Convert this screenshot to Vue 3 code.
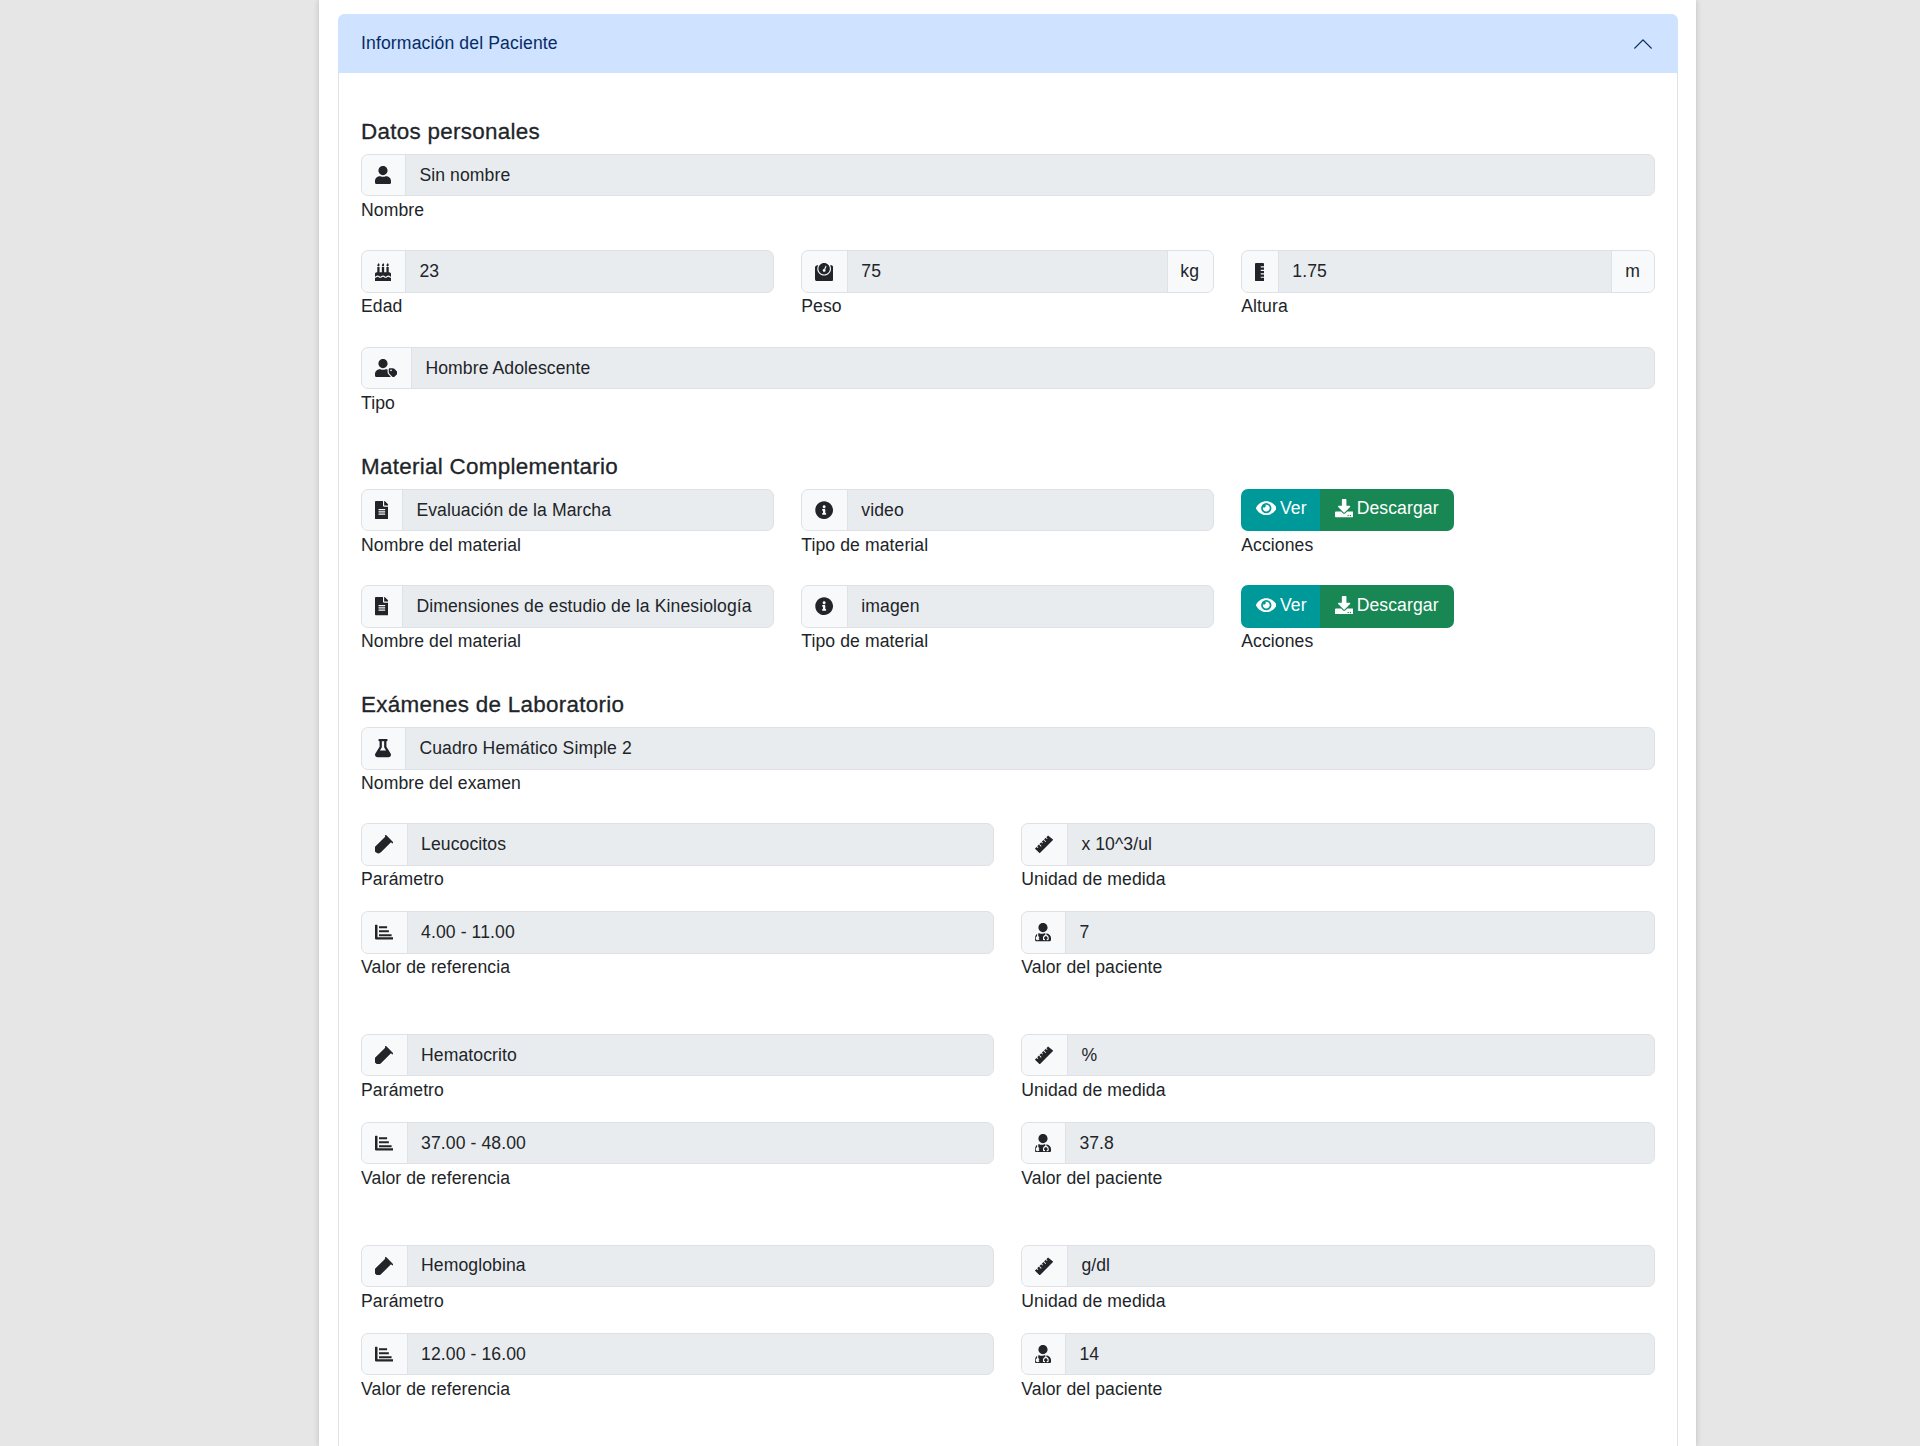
<script setup>
const ICONS = {
  user: [448, 'M224 256c70.7 0 128-57.3 128-128S294.7 0 224 0 96 57.3 96 128s57.3 128 128 128zm89.6 32h-16.7c-22.2 10.2-46.9 16-72.9 16s-50.6-5.8-72.9-16h-16.7C60.2 288 0 348.2 0 422.4V464c0 26.5 21.5 48 48 48h352c26.5 0 48-21.5 48-48v-41.6c0-74.2-60.2-134.4-134.4-134.4z'],
  cake: [448, 'M448 384c-28.02 0-31.26-32-74.5-32-43.43 0-46.825 32-74.75 32-27.695 0-31.454-32-74.75-32-42.842 0-47.218 32-74.5 32-28.148 0-31.202-32-74.75-32-43.547 0-46.653 32-74.75 32v-80c0-26.5 21.5-48 48-48h16V112h64v144h64V112h64v144h64V112h64v144h16c26.5 0 48 21.5 48 48v80zm0 128H0v-96c43.356 0 46.767-32 74.75-32 27.951 0 31.253 32 74.75 32 42.843 0 47.217-32 74.5-32 28.148 0 31.201 32 74.75 32 43.357 0 46.767-32 74.75-32 27.488 0 31.252 32 74.5 32v96zM96 96c-17.75 0-32-14.25-32-32 0-31 32-23 32-64 12 0 32 29.5 32 56s-14.25 40-32 40zm128 0c-17.75 0-32-14.25-32-32 0-31 32-23 32-64 12 0 32 29.5 32 56s-14.25 40-32 40zm128 0c-17.75 0-32-14.25-32-32 0-31 32-23 32-64 12 0 32 29.5 32 56s-14.25 40-32 40z'],
  weight: [512, 'M448 64h-25.98C438.44 92.28 448 125.01 448 160c0 105.87-86.13 192-192 192S64 265.87 64 160c0-34.99 9.56-67.72 25.98-96H64C28.71 64 0 92.71 0 128v320c0 35.29 28.71 64 64 64h384c35.29 0 64-28.71 64-64V128c0-35.29-28.71-64-64-64zM256 320c88.37 0 160-71.63 160-160S344.37 0 256 0 96 71.63 96 160s71.63 160 160 160zm-.3-151.94l33.58-78.36c3.5-8.17 12.94-11.92 21.03-8.41 8.12 3.48 11.88 12.89 8.41 21l-33.67 78.55C291.73 188 296 197.45 296 208c0 22.09-17.91 40-40 40s-40-17.91-40-40c0-21.98 17.76-39.77 39.7-39.94z'],
  rulerV: [256, 'M168 416c-4.42 0-8-3.58-8-8v-16c0-4.42 3.58-8 8-8h88v-64h-88c-4.42 0-8-3.58-8-8v-16c0-4.42 3.58-8 8-8h88v-64h-88c-4.42 0-8-3.58-8-8v-16c0-4.42 3.58-8 8-8h88v-64h-88c-4.42 0-8-3.58-8-8V96c0-4.42 3.58-8 8-8h88V32c0-17.67-14.33-32-32-32H32C14.33 0 0 14.33 0 32v448c0 17.67 14.33 32 32 32h192c17.67 0 32-14.33 32-32v-64h-88z'],
  userTag: [640, 'M630.6 364.9l-90.3-90.2c-12-12-28.3-18.7-45.3-18.7h-79.3c-17.7 0-32 14.3-32 32v79.2c0 17 6.7 33.2 18.7 45.2l90.3 90.2c12.5 12.5 32.8 12.5 45.3 0l92.5-92.5c12.6-12.4 12.6-32.7.1-45.2zm-182.8-21c-13.3 0-24-10.7-24-24s10.7-24 24-24 24 10.7 24 24c0 13.2-10.7 24-24 24zm-223.8-88c70.7 0 128-57.3 128-128C352 57.3 294.7 0 224 0S96 57.3 96 128c0 70.6 57.3 128 128 128zm127.8 111.2V294c-12.2-3.6-24.9-6.2-38.2-6.2h-16.7c-22.2 10.2-46.9 16-72.9 16s-50.6-5.8-72.9-16h-16.7C60.2 287.9 0 348.1 0 422.3v41.6c0 26.5 21.5 48 48 48h352c15.5 0 29.1-7.5 37.9-18.9l-58-58c-18.1-18.1-28.1-42.2-28.1-67.9z'],
  file: [384, 'M224 136V0H24C10.7 0 0 10.7 0 24v464c0 13.3 10.7 24 24 24h336c13.3 0 24-10.7 24-24V160H248c-13.2 0-24-10.8-24-24zm64 236c0 6.6-5.4 12-12 12H108c-6.6 0-12-5.4-12-12v-8c0-6.6 5.4-12 12-12h168c6.6 0 12 5.4 12 12v8zm0-64c0 6.6-5.4 12-12 12H108c-6.6 0-12-5.4-12-12v-8c0-6.6 5.4-12 12-12h168c6.6 0 12 5.4 12 12v8zm0-72v8c0 6.6-5.4 12-12 12H108c-6.6 0-12-5.4-12-12v-8c0-6.6 5.4-12 12-12h168c6.6 0 12 5.4 12 12zm96-114.1v6.1H256V0h6.1c6.4 0 12.5 2.5 17 7l97.9 98c4.5 4.5 7 10.6 7 16.9z'],
  info: [512, 'M256 8C119.043 8 8 119.083 8 256c0 136.997 111.043 248 248 248s248-111.003 248-248C504 119.083 392.957 8 256 8zm0 110c23.196 0 42 18.804 42 42s-18.804 42-42 42-42-18.804-42-42 18.804-42 42-42zm56 254c0 6.627-5.373 12-12 12h-88c-6.627 0-12-5.373-12-12v-24c0-6.627 5.373-12 12-12h12v-64h-12c-6.627 0-12-5.373-12-12v-24c0-6.627 5.373-12 12-12h64c6.627 0 12 5.373 12 12v100h12c6.627 0 12 5.373 12 12v24z'],
  eye: [576, 'M572.52 241.4C518.29 135.59 410.93 64 288 64S57.68 135.64 3.48 241.41a32.35 32.35 0 0 0 0 29.19C57.71 376.41 165.07 448 288 448s230.32-71.64 284.52-177.41a32.35 32.35 0 0 0 0-29.19zM288 400a144 144 0 1 1 144-144 143.93 143.93 0 0 1-144 144zm0-240a95.31 95.31 0 0 0-25.31 3.79 47.85 47.85 0 0 1-66.9 66.9A95.78 95.78 0 1 0 288 160z'],
  download: [512, 'M216 0h80c13.3 0 24 10.7 24 24v168h87.7c17.8 0 26.7 21.5 14.1 34.1L269.7 378.3c-7.5 7.5-19.8 7.5-27.3 0L90.1 226.1c-12.6-12.6-3.7-34.1 14.1-34.1H192V24c0-13.3 10.7-24 24-24zm296 376v112c0 13.3-10.7 24-24 24H24c-13.3 0-24-10.7-24-24V376c0-13.3 10.7-24 24-24h146.7l49 49c20.1 20.1 52.5 20.1 72.6 0l49-49H488c13.3 0 24 10.7 24 24zm-124 88c0-11-9-20-20-20s-20 9-20 20 9 20 20 20 20-9 20-20zm64 0c0-11-9-20-20-20s-20 9-20 20 9 20 20 20 20-9 20-20z'],
  flask: [448, 'M437.2 403.5L320 215V64h8c13.3 0 24-10.7 24-24V24c0-13.3-10.7-24-24-24H120c-13.3 0-24 10.7-24 24v16c0 13.3 10.7 24 24 24h8v151L10.8 403.5C-18.5 450.6 15.3 512 70.9 512h306.2c55.7 0 89.4-61.5 60.1-108.5zM137.9 320l48.2-77.6c3.7-5.2 5.8-11.6 5.8-18.4V64h64v160c0 6.9 2.2 13.2 5.8 18.4l48.2 77.6h-172z'],
  vial: [512, 'M319 9L503 193a24 24 0 0 1-34 34l-21-21L174 478a113 113 0 0 1-160-160L286 46l-1-1a24 24 0 0 1 34-36zM334 108L404 178L302 280H162z'],
  ruler: [512, 'M-2 380l47-47 32 32 17-17-32-32 47-47 57 57 17-17-57-57 47-47 32 32 17-17-32-32 47-47 57 57 17-17-57-57 47-47 32 32 17-17-32-32 47-47L514 132 132 514z'],
  chart: [512, 'M0 64a16 16 0 0 1 16-16h38a16 16 0 0 1 16 16v332h426a16 16 0 0 1 16 16v36a16 16 0 0 1-16 16H32a32 32 0 0 1-32-32zM112 92h226v56H112zM112 204h276v56H112zM112 316h352v56H112z'],
  userMd: [448, 'M224 256c70.7 0 128-57.3 128-128S294.7 0 224 0 96 57.3 96 128s57.3 128 128 128zM104 424c0 13.3 10.7 24 24 24s24-10.7 24-24-10.7-24-24-24-24 10.7-24 24zm216-135.4v49c36.5 7.4 64 39.8 64 78.4v41.7c0 7.6-5.4 14.2-12.9 15.7l-32.2 6.4c-4.3.9-8.5-1.9-9.4-6.3l-3.1-15.7c-.9-4.3 1.9-8.6 6.3-9.4l19.3-3.9V416c0-62.8-96-65.1-96 1.9v26.7l19.3 3.9c4.3.9 7.1 5.1 6.3 9.4l-3.1 15.7c-.9 4.3-5.1 7.1-9.4 6.3l-31.2-4.2c-7.9-1.1-13.8-7.8-13.8-15.9V416c0-38.6 27.5-70.9 64-78.4v-49c-3-.9-6-1.7-9.1-2.3h-16.7c-22.2 10.2-46.9 16-72.9 16s-50.6-5.8-72.9-16h-16.7c-3.1.6-6.1 1.4-9.1 2.3v81.6c23.1 6.9 40 28.1 40 53.4 0 30.9-25.1 56-56 56s-56-25.1-56-56c0-25.3 16.9-46.5 40-53.4v-67.2C44.3 316.4 0 369.5 0 422.4v44.8c0 24.7 20.1 44.8 44.8 44.8h358.4c24.7 0 44.8-20.1 44.8-44.8v-44.8c0-58.1-39.5-106.9-128-133.8z'],
}
const vb = (k) => `0 0 ${ICONS[k][0]} 512`
const iw = (k) => (ICONS[k][0] / 512) * 18.3 + 'px'

const materials = [
  { name: 'Evaluación de la Marcha', type: 'video' },
  { name: 'Dimensiones de estudio de la Kinesiología', type: 'imagen' },
]
const exams = [
  { p: 'Leucocitos', u: 'x 10^3/ul', r: '4.00 - 11.00', v: '7' },
  { p: 'Hematocrito', u: '%', r: '37.00 - 48.00', v: '37.8' },
  { p: 'Hemoglobina', u: 'g/dl', r: '12.00 - 16.00', v: '14' },
]
const examFields = (e) => [
  { i: 'vial', a: 46.7, t: e.p, l: 'Parámetro' },
  { i: 'ruler', a: 46.7, t: e.u, l: 'Unidad de medida' },
  { i: 'chart', a: 46.7, t: e.r, l: 'Valor de referencia' },
  { i: 'userMd', a: 44.7, t: e.v, l: 'Valor del paciente' },
]
const vitals = [
  { i: 'cake', a: 45, t: '23', l: 'Edad' },
  { i: 'weight', a: 46.7, t: '75', l: 'Peso', s: 'kg', sw: 47 },
  { i: 'rulerV', a: 37.7, t: '1.75', l: 'Altura', s: 'm', sw: 44 },
]
</script>

<template>
  <div class="page">
    <main class="card">
      <section class="accordion">
        <header class="acc-head">
          <span>Información del Paciente</span>
          <svg class="chev" viewBox="0 0 16 16"><path fill="currentColor" d="M1.646 11.354a.5.5 0 0 0 .708 0L8 5.707l5.646 5.647a.5.5 0 0 0 .708-.708l-6-6a.5.5 0 0 0-.708 0l-6 6a.5.5 0 0 0 0 .708z"/></svg>
        </header>
        <div class="acc-body">
          <h5>Datos personales</h5>
          <div class="field">
            <div class="group">
              <span class="addon" style="width:45px"><svg :viewBox="vb('user')" :style="{ width: iw('user') }"><path :d="ICONS.user[1]"/></svg></span>
              <span class="value">Sin nombre</span>
            </div>
            <label>Nombre</label>
          </div>

          <div class="row3 gap-row">
            <div v-for="f in vitals" :key="f.l" class="field">
              <div class="group">
                <span class="addon" :style="{ width: f.a + 'px' }"><svg :viewBox="vb(f.i)" :style="{ width: iw(f.i) }"><path :d="ICONS[f.i][1]"/></svg></span>
                <span class="value">{{ f.t }}</span>
                <span v-if="f.s" class="addon end" :style="{ width: f.sw + 'px' }">{{ f.s }}</span>
              </div>
              <label>{{ f.l }}</label>
            </div>
          </div>

          <div class="field gap-row">
            <div class="group">
              <span class="addon" style="width:51px"><svg :viewBox="vb('userTag')" :style="{ width: iw('userTag') }"><path :d="ICONS.userTag[1]"/></svg></span>
              <span class="value">Hombre Adolescente</span>
            </div>
            <label>Tipo</label>
          </div>

          <h5 class="next">Material Complementario</h5>
          <div v-for="(m, idx) in materials" :key="m.name" class="row3" :class="{ 'gap-row': idx > 0 }">
            <div class="field">
              <div class="group">
                <span class="addon" style="width:42px"><svg :viewBox="vb('file')" :style="{ width: iw('file') }"><path :d="ICONS.file[1]"/></svg></span>
                <span class="value">{{ m.name }}</span>
              </div>
              <label>Nombre del material</label>
            </div>
            <div class="field">
              <div class="group">
                <span class="addon" style="width:46.7px"><svg :viewBox="vb('info')" :style="{ width: iw('info') }"><path :d="ICONS.info[1]"/></svg></span>
                <span class="value">{{ m.type }}</span>
              </div>
              <label>Tipo de material</label>
            </div>
            <div class="field">
              <div class="btns">
                <button class="btn ver"><svg :viewBox="vb('eye')" :style="{ width: iw('eye') }"><path :d="ICONS.eye[1]"/></svg>Ver</button>
                <button class="btn desc"><svg :viewBox="vb('download')" :style="{ width: iw('download') }"><path :d="ICONS.download[1]"/></svg>Descargar</button>
              </div>
              <label>Acciones</label>
            </div>
          </div>

          <h5 class="next">Exámenes de Laboratorio</h5>
          <div class="field">
            <div class="group">
              <span class="addon" style="width:45px"><svg :viewBox="vb('flask')" :style="{ width: iw('flask') }"><path :d="ICONS.flask[1]"/></svg></span>
              <span class="value">Cuadro Hemático Simple 2</span>
            </div>
            <label>Nombre del examen</label>
          </div>

          <div v-for="e in exams" :key="e.p" class="exam">
            <div v-for="f in examFields(e)" :key="f.l" class="field">
              <div class="group">
                <span class="addon" :style="{ width: f.a + 'px' }"><svg :viewBox="vb(f.i)" :style="{ width: iw(f.i) }"><path :d="ICONS[f.i][1]"/></svg></span>
                <span class="value">{{ f.t }}</span>
              </div>
              <label>{{ f.l }}</label>
            </div>
          </div>
        </div>
      </section>
    </main>
  </div>
</template>

<style>
html, body { margin: 0; background: #e6e6e6; overflow: hidden; }
</style>

<style scoped>
.page {
  height: 1446px;
  overflow: hidden;
  background: #e6e6e6;
  font-family: "Liberation Sans", Arial, sans-serif;
  font-size: 17.6px;
  line-height: 26.4px;
  letter-spacing: .09px;
  color: #212529;
}
.card {
  width: 1377px;
  margin-left: 319px;
  height: 1446px;
  box-sizing: border-box;
  padding: 14px 18px 0 18.5px;
  background: #fff;
  box-shadow: 0 0 6px rgba(0, 0, 0, .18);
}
.accordion {
  height: 1432px;
  border: 1px solid #dee2e6;
  border-bottom: 0;
  border-radius: 7px 7px 0 0;
  box-sizing: border-box;
}
.acc-head {
  height: 59px;
  margin: -1px -1px 0;
  padding: 0 24px 0 23.5px;
  display: flex;
  align-items: center;
  justify-content: space-between;
  background: #cfe2ff;
  color: #052c65;
  letter-spacing: .13px;
  border-radius: 7px 7px 0 0;
  box-sizing: border-box;
}
.chev { width: 22px; height: 22px; }
.acc-body { padding: 45.8px 22px 0 22.5px; }
h5 {
  margin: 0 0 8.8px;
  font-size: 22.4px;
  font-weight: 400;
  letter-spacing: .3px;
  -webkit-text-stroke: .3px #212529;
  line-height: 26.4px;
}
h5.next { margin-top: 38px; }
.gap-row { margin-top: 27.7px; }
.row3 {
  display: grid;
  grid-template-columns: 412.7px 412.4px 1fr;
  column-gap: 27.6px;
}
.exam {
  margin-top: 27px;
  display: grid;
  grid-template-columns: 633px 1fr;
  column-gap: 27.3px;
  row-gap: 19.3px;
}
.exam + .exam { margin-top: 54px; }
.field { min-width: 0; }
label {
  display: block;
  height: 26.4px;
  box-sizing: border-box;
  padding-top: .6px;
}
.group {
  display: flex;
  height: 42.4px;
  box-sizing: border-box;
  border: 1px solid #dee2e6;
  border-radius: 7px;
  background: #e9ecef;
  overflow: hidden;
}
.addon {
  flex: none;
  display: flex;
  align-items: center;
  justify-content: center;
  background: #f8f9fa;
  border-right: 1px solid #dee2e6;
  box-sizing: border-box;
  margin-left: -1px;
}
.addon.end {
  border-right: 0;
  border-left: 1px solid #dee2e6;
  margin-left: 0;
  margin-right: -1px;
  padding-right: 2px;
}
.addon svg { height: 18.3px; fill: #212529; display: block; }
.value {
  flex: 1;
  min-width: 0;
  padding: 6.6px 13.2px 6px 13.4px;
  white-space: nowrap;
}
.btns { display: inline-flex; height: 42.4px; border-radius: 7px; overflow: hidden; }
.btn {
  display: flex;
  align-items: center;
  gap: 3.7px;
  border: 0;
  padding: 0 0 3px 14.4px;
  color: #fff;
  font: inherit;
  letter-spacing: inherit;
}
.btn svg { height: 18.3px; fill: #fff; }
.ver { width: 79px; background: #009999; }
.desc { width: 134px; background: #198754; }
</style>
